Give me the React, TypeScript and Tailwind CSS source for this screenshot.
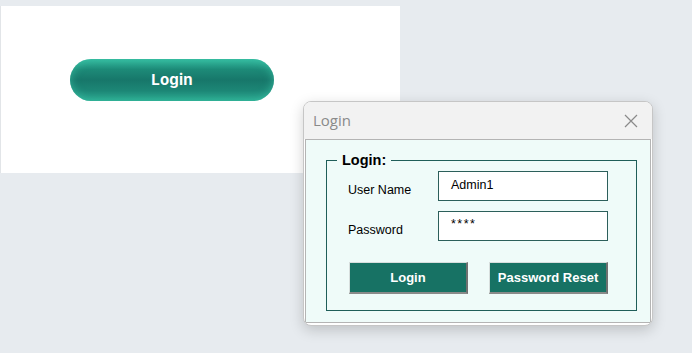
import React from "react";

export default function App() {
  return (
    <div className="relative w-[692px] h-[353px] overflow-hidden bg-[#e7ebef]" style={{ fontFamily: '"Liberation Sans", Arial, sans-serif' }}>
      <div className="h-[6px]" />
      <div className="w-[400px] h-[167px] bg-white border-l border-[#e2e5e8] flex pt-[53px] pl-[69px]">
        <button
          className="w-[204px] h-[42px] rounded-full text-white text-[15px] font-bold tracking-[0.2px] bg-[linear-gradient(to_bottom,#33b79d_0%,#1d8a78_25%,#17776a_50%,#1d8676_75%,#2aa68e_100%)] shadow-[inset_0_0_10px_rgba(60,200,170,0.7)]"
          style={{ fontFamily: 'Inter, "Noto Sans", sans-serif' }}
        >
          Login
        </button>
      </div>

      {/* Dialog window */}
      <div className="absolute left-[303px] top-[101px] w-[350px] h-[225px] rounded-[8px] border border-[#c6c6c6] bg-white shadow-[0_4px_14px_rgba(0,0,0,0.18)] flex flex-col overflow-hidden">
        <div className="h-[37px] bg-[#f2f2f2] flex items-center justify-between pl-[9px] pr-[14px] shrink-0">
          <span className="text-[15px] text-[#8a8a8a]" style={{ fontFamily: '"Open Sans", "Noto Sans", sans-serif' }}>Login</span>
          <svg width="14" height="14" viewBox="0 0 14 14" className="text-[#8a8a8a]">
            <path d="M1 1 L13 13 M13 1 L1 13" stroke="currentColor" strokeWidth="1.2" fill="none" />
          </svg>
        </div>
        <div className="flex-1 mx-[1px] mb-[2px] border border-[#b4b4b4] bg-[#effbf9] pt-[12px] pl-[20px] pr-[13px]">
          <fieldset className="w-[310px] border border-[#1f5e59] pl-[21px] pr-[28px] pb-[16px]">
            <legend className="ml-[-11px] px-[5px] text-[14.5px] leading-[16px] font-bold text-black">Login:</legend>
            <div className="pt-[3px] flex flex-col gap-[10px]">
              <div className="flex items-center">
                <span className="w-[90px] pt-[8px] text-[12.5px] text-black">User Name</span>
                <div className="w-[170px] h-[30px] bg-white border border-[#2c5f5b] pl-[12px] pt-[4px] text-[12.5px] text-black">Admin1</div>
              </div>
              <div className="flex items-center">
                <span className="w-[90px] pt-[8px] text-[12.5px] text-black">Password</span>
                <div className="w-[170px] h-[30px] bg-white border border-[#2c5f5b] pl-[12px] pt-[3px] text-[12.5px] text-black tracking-[1.5px]">****</div>
              </div>
            </div>
            <div className="mt-[21px] flex justify-between pl-[1px]">
              <button className="w-[119px] h-[32px] bg-[#177264] text-white text-[13px] font-bold border-t border-l border-[#d7dedd] border-r-2 border-b-2 border-r-[#707070] border-b-[#8a8a8a]">Login</button>
              <button className="w-[119px] h-[32px] bg-[#177264] text-white text-[13px] font-bold border-t border-l border-[#d7dedd] border-r-2 border-b-2 border-r-[#707070] border-b-[#8a8a8a]">Password Reset</button>
            </div>
          </fieldset>
        </div>
      </div>
    </div>
  );
}
